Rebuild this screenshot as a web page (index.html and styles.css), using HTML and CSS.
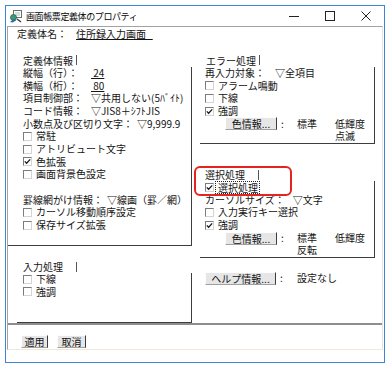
FILE: index.html
```html
<!DOCTYPE html>
<html lang="ja">
<head>
  <meta charset="UTF-8" />
  <title>画面帳票定義体のプロパティ</title>
  <link rel="stylesheet" href="styles.css">
</head>
<body>
  <div class="window">
    <div class="titlebar">
      <svg class="app-icon" viewBox="0 0 13 13">
        <rect x="4.5" y="0.5" width="8" height="7" fill="#fff" stroke="#6d6d6d"/>
        <rect x="6" y="2" width="5" height="4" fill="#cfe3d6"/>
        <circle cx="4.5" cy="7.5" r="3" fill="#3f9a72" stroke="#2b5f48" stroke-width="0.8"/>
        <path d="M1 12 L5 9 L7 10.5 L3.5 12.5 Z" fill="#2a63b8"/>
        <path d="M8 9 L12 12" stroke="#333" stroke-width="1.2"/>
      </svg>
      <span class="title">画面帳票定義体のプロパティ</span>
      <div class="controls">
        <span><svg width="10" height="10" viewBox="0 0 10 10"><path d="M0 5.5 H10" stroke="#222" stroke-width="1"/></svg></span>
        <span><svg width="10" height="10" viewBox="0 0 10 10"><rect x="0.5" y="0.5" width="9" height="9" fill="none" stroke="#222"/></svg></span>
        <span><svg width="10" height="10" viewBox="0 0 10 10"><path d="M0.5 0.5 L9.5 9.5 M9.5 0.5 L0.5 9.5" stroke="#222" stroke-width="1"/></svg></span>
      </div>
    </div>

    <div class="client">
      <div class="name-row">
        <span class="k">定義体名：</span>
        <span class="u">住所録入力画面&nbsp;&nbsp;&nbsp;</span>
      </div>

      <div class="panes">
        <div class="col-left">
          <div class="legend"><span class="t">定義体情報</span><span class="bar"></span></div>
          <div class="frame frame-info">
            <div class="row kv"><span class="k">縦幅（行）：</span><span class="v u">&nbsp;24</span></div>
            <div class="row kv"><span class="k">横幅（桁）：</span><span class="v u">&nbsp;80</span></div>
            <div class="row kv"><span class="k">項目制御部：</span><span class="v">▽共用しない(5ﾊﾞｲﾄ)</span></div>
            <div class="row kv"><span class="k">コード情報：</span><span class="v">▽JIS8＋ｼﾌﾄJIS</span></div>
            <div class="row kv"><span class="k">小数点及び区切り文字：</span><span class="v">▽9,999.9</span></div>
            <div class="row"><span class="cb"></span>常駐</div>
            <div class="row"><span class="cb"></span>アトリビュート文字</div>
            <div class="row"><span class="cb on"><svg viewBox="0 0 7 7"><path d="M0.8 3.4 L2.6 5.2 L6.2 1.4" fill="none" stroke="#1a1a1a" stroke-width="1.3"/></svg></span>色拡張</div>
            <div class="row"><span class="cb"></span>画面背景色設定</div>
            <div class="row"></div>
            <div class="row kv"><span class="k">罫線網がけ情報：</span><span class="v">▽線画（罫／網）</span></div>
            <div class="row"><span class="cb"></span>カーソル移動順序設定</div>
            <div class="row"><span class="cb"></span>保存サイズ拡張</div>
          </div>

          <div class="group-input">
            <div class="legend"><span class="t">入力処理</span><span class="bar"></span></div>
            <div class="frame frame-input">
              <div class="row"><span class="cb"></span>下線</div>
              <div class="row"><span class="cb"></span>強調</div>
            </div>
          </div>
        </div>

        <div class="col-right">
          <div class="legend"><span class="t">エラー処理</span><span class="bar"></span></div>
          <div class="frame frame-r">
            <div class="row kv"><span class="k">再入力対象：</span><span class="v">▽全項目</span></div>
            <div class="row"><span class="cb"></span>アラーム鳴動</div>
            <div class="row"><span class="cb"></span>下線</div>
            <div class="row"><span class="cb on"><svg viewBox="0 0 7 7"><path d="M0.8 3.4 L2.6 5.2 L6.2 1.4" fill="none" stroke="#1a1a1a" stroke-width="1.3"/></svg></span>強調</div>
            <div class="row colors">
              <button class="btn btn-color">色情報...</button>
              <span class="sep">:</span>
              <span class="c1">標準</span>
              <span>低輝度</span>
            </div>
            <div class="row sub2">点滅</div>
          </div>

          <div class="group-sel">
            <div class="legend"><span class="t">選択処理</span><span class="bar"></span></div>
            <div class="frame frame-r">
              <div class="row"><span class="cb on"><svg viewBox="0 0 7 7"><path d="M0.8 3.4 L2.6 5.2 L6.2 1.4" fill="none" stroke="#1a1a1a" stroke-width="1.3"/></svg></span><span class="focus">選択処理</span></div>
              <div class="row kv"><span class="k">カーソルサイズ：</span><span class="v">▽文字</span></div>
              <div class="row"><span class="cb"></span>入力実行キー選択</div>
              <div class="row"><span class="cb on"><svg viewBox="0 0 7 7"><path d="M0.8 3.4 L2.6 5.2 L6.2 1.4" fill="none" stroke="#1a1a1a" stroke-width="1.3"/></svg></span>強調</div>
              <div class="row colors">
                <button class="btn btn-color">色情報...</button>
                <span class="sep">:</span>
                <span class="c1">標準</span>
                <span>低輝度</span>
              </div>
              <div class="row sub1">反転</div>
            </div>
            <div class="mark"></div>
          </div>

          <div class="row colors help">
            <button class="btn btn-help">ヘルプ情報...</button>
            <span class="sep">:</span>
            <span>設定なし</span>
          </div>
        </div>
      </div>

      <div class="footer">
        <button class="btn btn-apply">適用</button>
        <button class="btn btn-cancel">取消</button>
      </div>
    </div>
  </div>
</body>
</html>
```

FILE: styles.css
```css
* {
  box-sizing: border-box;
}

body {
  margin: 0;
  background: #fff;
  font-family: "Noto Sans CJK JP", "Noto Sans", sans-serif;
  font-size: 10px;
  color: #141414;
}

.window {
  margin: 5px 0 0 5px;
  width: 380px;
  height: 358px;
  border: 1px solid #3b86d5;
  display: flex;
  flex-direction: column;
}

.titlebar {
  height: 20px;
  flex: none;
  display: flex;
  align-items: center;
}

.app-icon {
  width: 13px;
  height: 13px;
  margin-left: 3px;
}

.title {
  flex: 1;
  margin-left: 4px;
  font-size: 9px;
  letter-spacing: -0.4px;
  color: #000;
}

.controls {
  display: flex;
}

.controls span {
  width: 36px;
  height: 20px;
  display: flex;
  align-items: center;
  justify-content: center;
}

.client {
  margin: 0 1px;
  height: 324px;
  border-top: 1px solid #a3a3a3;
  border-left: 1px solid #a3a3a3;
  border-right: 1px solid #e4e4e4;
  border-bottom: 1px solid #efe9d6;
  display: flex;
  flex-direction: column;
}

.name-row {
  height: 13px;
  line-height: 13px;
  padding-left: 9px;
  display: flex;
  white-space: nowrap;
}

.name-row .k {
  width: 59px;
}

.u {
  text-decoration: underline;
  text-underline-offset: 1px;
}

/* two panes, separated from the footer by a grey rule */
.panes {
  display: grid;
  grid-template-columns: 184px 1fr;
  padding-top: 14.15px;
  border-bottom: 2px solid #8e8e8e;
}

.row {
  height: 12.7px;
  line-height: 12.7px;
  display: flex;
  align-items: center;
  white-space: nowrap;
}

.legend {
  height: 12.7px;
  display: flex;
  align-items: center;
  white-space: nowrap;
}

.legend .t {
  width: 53px;
}

.legend .bar {
  width: 1px;
  height: 10px;
  background: #555;
}

.frame {
  border-right: 1px solid #3d3d3d;
  border-bottom: 1px solid #3d3d3d;
}

.kv .k {
  min-width: 64px;
  margin-right: 4px;
}

.col-left .legend {
  padding-left: 15px;
}

.frame-info {
  padding: 0 0 13px 15px;
}

.group-input {
  margin-top: 14.4px;
}

.frame-input {
  margin-left: 9px;
  padding: 0 0 23.5px 6px;
}

.col-right .legend {
  padding-left: 14px;
}

.frame-r {
  margin: 0 7px 0 8px;
  padding-left: 5px;
}

.col-right .kv .k {
  min-width: 62px;
  margin-right: 8px;
}

.cb {
  width: 9px;
  height: 9px;
  margin-right: 4px;
  flex: none;
  background: #fff;
  border: 1px solid;
  border-color: #7c7c7c #d4d4d4 #d4d4d4 #7c7c7c;
  display: flex;
}

.cb svg {
  width: 7px;
  height: 7px;
}

.focus {
  outline: 1px dotted #222;
  outline-offset: 0;
  padding: 0 1px 0 2px;
  line-height: 11px;
  margin-left: -2px;
}

.btn {
  height: 13px;
  padding: 0;
  font-family: inherit;
  font-size: 10px;
  line-height: 11px;
  color: #141414;
  background: #e6e6e6;
  border: 1px solid;
  border-color: #fdfdfd #3c3c3c #a0a0a0 #fdfdfd;
  white-space: nowrap;
}

.btn-color {
  width: 52px;
  margin-left: 20px;
}

.colors .sep {
  width: 20px;
  padding-left: 4px;
}

.colors .c1 {
  width: 38px;
}

.sub2 {
  padding-left: 130px;
}

.sub1 {
  padding-left: 92px;
}

.group-sel {
  position: relative;
  margin-top: 24.4px;
}

.col-right .group-sel .legend {
  padding-left: 13px;
}

/* red annotation ring drawn over the legend and first row */
.mark {
  position: absolute;
  left: 2px;
  top: -2px;
  width: 98px;
  height: 30px;
  border: 2px solid #e52421;
  border-radius: 6px;
}

.help {
  margin-top: 13.6px;
  padding-left: 13px;
}

.btn-help {
  width: 71px;
}

.help .sep {
  width: 21px;
}

.footer {
  padding: 10px 0 0 13px;
  display: flex;
  gap: 9px;
}

.btn-apply {
  width: 27px;
}

.btn-cancel {
  width: 29px;
}
```
